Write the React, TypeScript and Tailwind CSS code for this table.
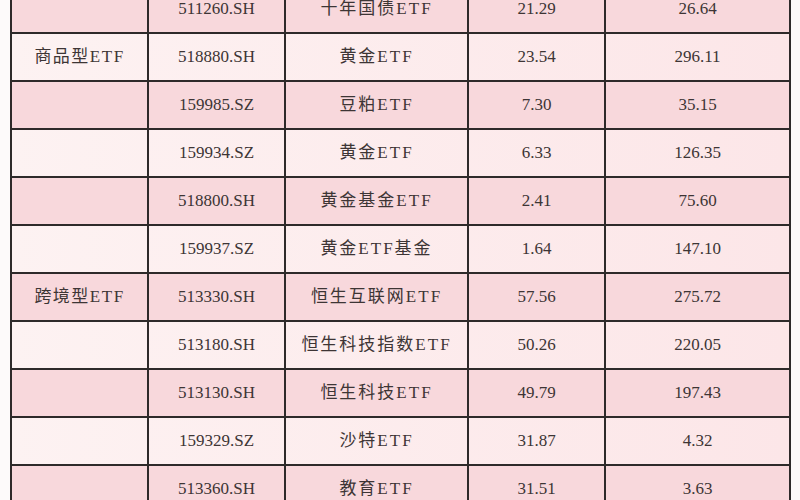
type Row = {
  type: string
  code: string
  name: string
  price: string
  size: string
}

const rows: Row[] = [
  { type: '', code: '511260.SH', name: '十年国债ETF', price: '21.29', size: '26.64' },
  { type: '商品型ETF', code: '518880.SH', name: '黄金ETF', price: '23.54', size: '296.11' },
  { type: '', code: '159985.SZ', name: '豆粕ETF', price: '7.30', size: '35.15' },
  { type: '', code: '159934.SZ', name: '黄金ETF', price: '6.33', size: '126.35' },
  { type: '', code: '518800.SH', name: '黄金基金ETF', price: '2.41', size: '75.60' },
  { type: '', code: '159937.SZ', name: '黄金ETF基金', price: '1.64', size: '147.10' },
  { type: '跨境型ETF', code: '513330.SH', name: '恒生互联网ETF', price: '57.56', size: '275.72' },
  { type: '', code: '513180.SH', name: '恒生科技指数ETF', price: '50.26', size: '220.05' },
  { type: '', code: '513130.SH', name: '恒生科技ETF', price: '49.79', size: '197.43' },
  { type: '', code: '159329.SZ', name: '沙特ETF', price: '31.87', size: '4.32' },
  { type: '', code: '513360.SH', name: '教育ETF', price: '31.51', size: '3.63' },
]

export default function App() {
  return (
    <div className="w-[800px] h-[500px] overflow-hidden bg-[#fdfafa] font-['Liberation_Serif','Noto_Sans_CJK_SC',serif] text-[17px] text-[#3d3535]">
      <div className="ml-[10px] mt-[-14px] w-[781px] border-x-2 border-[#2e2a2a]">
        {rows.map((r, i) => (
          <div
            key={r.code}
            className={`grid grid-cols-[137px_137px_183px_137px_183px] h-12 border-b-2 border-[#2e2a2a] ${
              i % 2 === 0 ? 'bg-[#f8d8dc]' : 'bg-gradient-to-r from-[#fdf2f2] to-[#fce6e8]'
            }`}
          >
            <div className="flex items-center justify-center border-r-2 border-[#2e2a2a] tracking-[1.5px]">{r.type}</div>
            <div className="flex items-center justify-center border-r-2 border-[#2e2a2a]">{r.code}</div>
            <div className="flex items-center justify-center border-r-2 border-[#2e2a2a] tracking-[2px]">{r.name}</div>
            <div className="flex items-center justify-center border-r-2 border-[#2e2a2a]">{r.price}</div>
            <div className="flex items-center justify-center">{r.size}</div>
          </div>
        ))}
      </div>
    </div>
  )
}
